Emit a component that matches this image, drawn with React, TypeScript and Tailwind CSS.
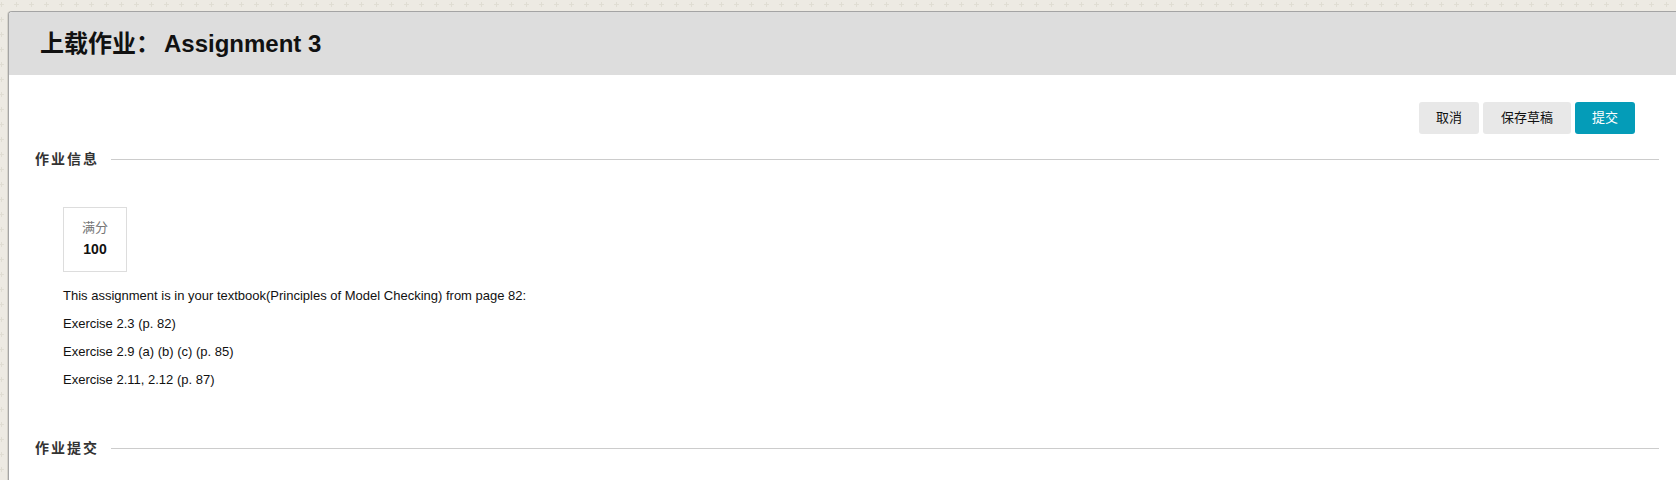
import React from "react";

const cjk = "font-['Liberation_Sans','Noto_Sans_CJK_SC',sans-serif]";

const SectionHeading = ({ label }: { label: string }) => (
  <div className="flex items-center h-[20px]">
    <span className="text-[14px] font-bold tracking-[2px] text-[#333333]">{label}</span>
    <div className="flex-1 h-px bg-[#cccccc] ml-[12px]"></div>
  </div>
);

const App = () => {
  const exercises = [
    "This assignment is in your textbook(Principles of Model Checking) from page 82:",
    "Exercise 2.3 (p. 82)",
    "Exercise 2.9 (a) (b) (c) (p. 85)",
    "Exercise 2.11, 2.12 (p. 87)",
  ];

  return (
    <div
      className={`${cjk} h-[480px] overflow-hidden pt-[11px] pl-[8px] bg-[#edeae3] [background-image:linear-gradient(to_right,#edeae3_5px,transparent_5px,transparent_10px,#edeae3_10px),linear-gradient(to_bottom,#edeae3_5px,transparent_5px,transparent_10px,#edeae3_10px),linear-gradient(to_right,transparent_7px,#e0ddd3_7px,#e0ddd3_8px,transparent_8px),linear-gradient(to_bottom,transparent_7px,#e0ddd3_7px,#e0ddd3_8px,transparent_8px)] [background-size:15px_15px] [background-position:-6px_-3px]`}
    >
      <div className="h-full bg-white border-t border-l border-[#a4a4a4] rounded-tl-[4px] overflow-hidden shadow-[-1px_0_0_#d6d3cb]">
        {/* Page title bar */}
        <div className="h-[63px] bg-[#dddddd] flex items-center pl-[31px]">
          <h1 className="text-[24px] font-bold text-[#111111]">
            上载作业：<span className="ml-[4px]">Assignment 3</span>
          </h1>
        </div>

        <div className="pl-[26px] pr-[17px]">
          {/* Action buttons */}
          <div className="flex justify-end gap-[4px] mt-[27px] pr-[24px]">
            <button className="h-[32px] px-[17px] rounded-[3px] bg-[#e8e8e8] text-[13px] text-[#111111]">取消</button>
            <button className="h-[32px] px-[18px] rounded-[3px] bg-[#e8e8e8] text-[13px] text-[#111111]">保存草稿</button>
            <button className="h-[32px] px-[17px] rounded-[3px] bg-[#049cb8] text-[13px] text-white">提交</button>
          </div>

          <div className="mt-[15px]">
            <SectionHeading label="作业信息" />
          </div>

          <div className="ml-[28px]">
            <div className="mt-[38px] w-[64px] h-[65px] border border-[#dddddd] flex flex-col items-center pt-[10px]">
              <span className="text-[13px] leading-[20px] text-[#777777]">满分</span>
              <span className="text-[14px] leading-[22px] font-bold text-[#111111]">100</span>
            </div>

            <div className="mt-[10px]">
              {exercises.map((line) => (
                <p key={line} className="text-[13px] leading-[28px] text-[#111111]">
                  {line}
                </p>
              ))}
            </div>
          </div>

          <div className="mt-[44px]">
            <SectionHeading label="作业提交" />
          </div>
        </div>
      </div>
    </div>
  );
};

export default App;
